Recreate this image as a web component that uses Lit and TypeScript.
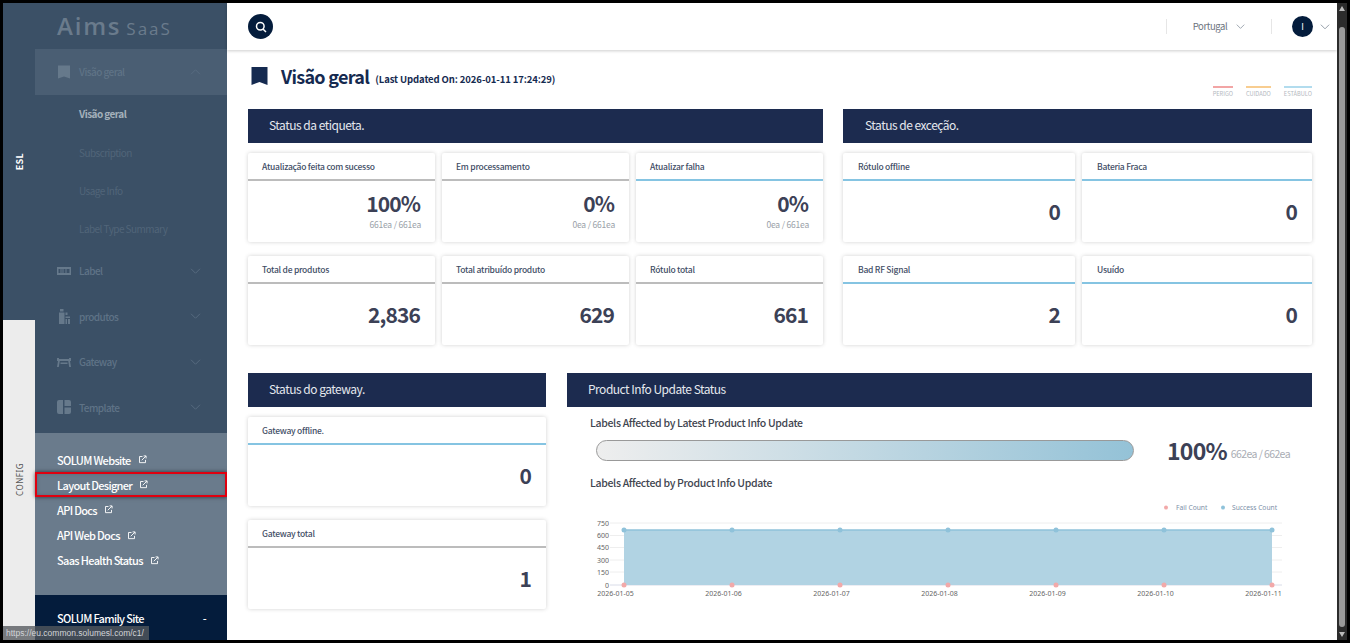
import { LitElement, html, css, svg } from "lit";
import { customElement } from "lit/decorators.js";

const chevron = (cls: string, up = false) => html`<svg class=${cls} viewBox="0 0 14 8" fill="none" stroke="currentColor" stroke-width="1.3"><path d=${up ? "M1 7 7 1l6 6" : "M1 1l6 6 6-6"} /></svg>`;
const ext = html`<svg class="ext" viewBox="0 0 12 12" fill="none" stroke="currentColor" stroke-width="1.2"><path d="M6 2H2v8.200h8V6.500" /><path d="M5 7l5.600-5.600M7.400 1.200h3.400v3.400" /></svg>`;
const navBookmark = html`<svg class="nav-icon" viewBox="0 0 14 18" fill="currentColor"><path d="M1 2.500h12v13l-6-2-6 2z" /></svg>`;

const labelIcon = html`<svg class="nav-icon" viewBox="0 0 14 18" fill="currentColor"><path fill-rule="evenodd" d="M0 5h14v8H0zM1.500 7v4h2V7zm3 0v4h1V7zm2 0v4h2V7zm3 0v4h3V7z" /></svg>`;
const productIcon = html`<svg class="nav-icon" viewBox="0 0 14 18" fill="currentColor"><path d="M2 5.500h5.500V17H2zM3 2h3.500v2.500H3zM8.500 9.500H13V11H8.500zM8.500 12H10v5H8.500zM11 12h2v5h-2zM8.500 5.500h2v2.500h-2z" /></svg>`;
const gatewayIcon = html`<svg class="nav-icon" viewBox="0 0 14 18" fill="currentColor"><path d="M0 5h2v1h10V5h2v3h-1l1 6h-1.800l-1-6H2.800l-1 6H0l1-6H0z" /><path d="M3.500 9.500h7V11h-7z" /></svg>`;
const templateIcon = html`<svg class="nav-icon" viewBox="0 0 14 18" fill="currentColor"><path d="M2 2h4v14H2a2 2 0 0 1-2-2V4a2 2 0 0 1 2-2zM7.500 2H12a2 2 0 0 1 2 2v4H7.500zM7.500 9.500H14V14a2 2 0 0 1-2 2H7.500z" /></svg>`;

type Card = { title: string; value: string; sub?: string; tone: "grey" | "blue" };

const labelCards: Card[] = [
  { title: "Atualização feita com sucesso", value: "100%", sub: "661ea / 661ea", tone: "grey" },
  { title: "Em processamento", value: "0%", sub: "0ea / 661ea", tone: "grey" },
  { title: "Atualizar falha", value: "0%", sub: "0ea / 661ea", tone: "blue" },
  { title: "Total de produtos", value: "2,836", tone: "grey" },
  { title: "Total atribuído produto", value: "629", tone: "grey" },
  { title: "Rótulo total", value: "661", tone: "grey" },
];
const exceptionCards: Card[] = [
  { title: "Rótulo offline", value: "0", tone: "blue" },
  { title: "Bateria Fraca", value: "0", tone: "blue" },
  { title: "Bad RF Signal", value: "2", tone: "blue" },
  { title: "Usuído", value: "0", tone: "blue" },
];
const gatewayCards: Card[] = [
  { title: "Gateway offline.", value: "0", tone: "blue" },
  { title: "Gateway total", value: "1", tone: "grey" },
];

const xs = [624, 732, 840, 948, 1056, 1164, 1272];
const dates = ["2026-01-05", "2026-01-06", "2026-01-07", "2026-01-08", "2026-01-09", "2026-01-10", "2026-01-11"];
const ticks = [[750, 523], [600, 535.5], [450, 547.5], [300, 560], [150, 572], [0, 585]];
const OX = 590;
const OY = 497;

@customElement("app-root")
export class AppRoot extends LitElement {
  static styles = css`
    :host { display: block; width: 1350px; height: 643px; overflow: hidden; background: #000; position: relative; font-family: "Noto Sans CJK KR", "Noto Sans", sans-serif; color: #3a4256; }
    * { box-sizing: border-box; }
    .frame { display: flex; height: 637px; margin: 3px 0 3px 3px; }

    .rail { width: 32px; flex: none; display: flex; flex-direction: column; }
    .rail-top { height: 317px; background: #3b5066; display: flex; justify-content: center; padding-top: 150px; }
    .rail-bottom { flex: 1; background: #ececec; display: flex; justify-content: center; padding-top: 143px; }
    .vert { writing-mode: vertical-rl; transform: rotate(180deg); height: max-content; }
    .esl { font-size: 9px; font-weight: 700; color: #fff; letter-spacing: .3px; }
    .config { font-size: 8px; color: #555; letter-spacing: .5px; font-family: "Noto Sans", sans-serif; }

    .side { width: 192px; flex: none; display: flex; flex-direction: column; background: #3b5066; }
    .logo { height: 46px; display: flex; align-items: center; gap: 5px; padding-left: 22px; color: #6a7b8c; white-space: nowrap; }
    .logo b { font: 600 24px/1 "Open Sans", sans-serif; letter-spacing: 1.8px; }
    .logo span { font: 400 17px/1 "Open Sans", sans-serif; letter-spacing: 2px; padding-top: 4px; }
    .nav { flex: 1; }
    .nav-item { height: 45.5px; display: flex; align-items: center; padding-left: 22px; font-size: 10px; font-weight: 500; letter-spacing: -.55px; color: #5f7386; }
    .nav-item.active { background: #4a5e73; }
    .nav-icon { width: 14px; height: 18px; flex: none; margin-right: 8px; color: #66798b; }
    .nav-item .chev { width: 11px; height: 6px; margin-left: auto; margin-right: 26px; color: #566b80; }
    .sub { height: 38.4px; display: flex; align-items: center; padding-left: 44px; font-size: 10px; letter-spacing: -.55px; color: #516579; }
    .sub.current { color: #a4b0bb; font-weight: 700; }

    .links { height: 162px; background: #6a7b8c; padding-top: 14px; }
    .link { height: 25.2px; display: flex; align-items: center; gap: 7px; padding-left: 22px; font-size: 11px; font-weight: 500; letter-spacing: -.66px; color: #fff; white-space: nowrap; }
    .ext { width: 9px; height: 9px; flex: none; }
    .link.hl { box-shadow: inset 0 0 0 2px #e0000f, 0 0 4px rgba(0, 0, 0, .6), inset 0 0 5px rgba(0, 0, 0, .4); }
    .family { height: 45px; background: #041c3c; color: #fff; display: flex; align-items: center; justify-content: space-between; padding: 0 21px 0 22px; font-size: 11px; font-weight: 500; letter-spacing: -.66px; }

    .main { flex: 1; background: #fff; display: flex; flex-direction: column; min-width: 0; }
    .top { height: 47px; flex: none; display: flex; align-items: center; padding: 0 7px 0 21px; box-shadow: 0 1px 3px rgba(0, 0, 0, .2); }
    .search { width: 25px; height: 25px; border-radius: 50%; background: #041c3c; display: grid; place-items: center; color: #fff; }
    .search svg { width: 12px; height: 12px; }
    .sep { width: 1px; height: 15px; background: #e6e6e6; }
    .country { margin-left: auto; }
    .lang { display: flex; align-items: center; gap: 9px; font-size: 9.5px; letter-spacing: -.4px; color: #6d7480; width: 104px; justify-content: center; padding-bottom: 1px; }
    .lang svg { width: 9px; height: 5px; color: #8a94a0; }
    .user svg { width: 10px; height: 5.5px; color: #8a94a0; }
    .user { display: flex; align-items: center; gap: 7px; padding-left: 20px; }
    .avatar { width: 21px; height: 21px; border-radius: 50%; background: #041c3c; color: #fff; display: grid; place-items: center; font-size: 9px; }

    .body { flex: 1; padding: 5px 25px 0 21px; display: flex; flex-direction: column; min-height: 0; }
    .head { height: 44px; flex: none; display: flex; align-items: center; padding-bottom: 2px; }
    .mark { width: 17px; height: 18px; color: #152a50; margin: 0 13px 0 3px; flex: none; }
    .head h1 { margin: 0; font-size: 18px; font-weight: 700; letter-spacing: -.7px; color: #152a50; line-height: 1; }
    .head small { font-size: 9.5px; font-weight: 700; letter-spacing: -.1px; color: #152a50; margin-left: 6px; padding-top: 5px; }
    .legend { margin-left: auto; display: flex; gap: 13px; align-self: flex-end; margin-bottom: 0; font-size: 5.7px; color: #b4b9c0; }
    .legend span { padding-top: 3px; border-top: 2px solid; line-height: 1; }
    .legend .r { border-color: #f2a5a5; }
    .legend .y { border-color: #f8cd90; }
    .legend .b { border-color: #b2dcee; }

    .row { display: grid; gap: 20px; }
    .row.one { grid-template-columns: 575px 1fr; height: 264px; margin-top: 10px; }
    .row.two { grid-template-columns: 298px 1fr; gap: 21px; }
    .band { height: 34px; background: #1c2b4f; color: #e4e8ee; font-size: 12px; letter-spacing: -.5px; display: flex; align-items: center; padding: 0 0 3px 21px; white-space: nowrap; }
    .exception .band { padding-left: 22px; }
    .cards { display: grid; gap: 14px 7px; margin-top: 10px; }
    .cards.c3 { grid-template-columns: repeat(3, 1fr); }
    .cards.c2 { grid-template-columns: 232px 230px; }
    .cards.c1 { grid-template-columns: 1fr; }
    .card { height: 89px; border-radius: 2px; box-shadow: 0 0 4px rgba(0, 0, 0, .18); display: flex; flex-direction: column; background: #fff; }
    .t { height: 28px; flex: none; border-bottom: 2px solid; padding: 0 14px; font-size: 8.5px; font-weight: 500; letter-spacing: -.25px; color: #3f4e66; display: flex; align-items: center; white-space: nowrap; }
    .exception .t { padding-left: 15px; }
    .grey .t { border-color: #bcbcbc; }
    .blue .t { border-color: #85c4e2; }
    .v { flex: 1; display: flex; flex-direction: column; align-items: flex-end; justify-content: center; padding: 0 15px 2px 14px; font-size: 21px; font-weight: 700; letter-spacing: -.9px; color: #3c4156; line-height: 24px; }
    .s { font-size: 8.5px; font-weight: 400; color: #9a9fa8; line-height: 12px; letter-spacing: -.2px; margin-top: 3px; margin-right: -1px; }

    .info { padding: 8px 0 0 23px; }
    .info h3 { margin: 0; font-size: 10.5px; font-weight: 500; letter-spacing: -.33px; color: #3f4550; line-height: 16px; }
    .meter { display: flex; align-items: center; margin: 8px 0 14px 6px; }
    .bar { width: 538px; height: 21px; border-radius: 11px; border: 1px solid #999; background: linear-gradient(90deg, #eeeeee, #94c2d7); }
    .pct { margin-left: 33px; font-size: 23px; font-weight: 700; letter-spacing: -.75px; color: #3c4156; line-height: 21px; }
    .ea { margin-left: 4px; font-size: 10.5px; letter-spacing: -.6px; color: #a9adb4; padding-top: 7px; }
    .chart { display: block; margin-top: 6px; width: 700px; height: 110px; overflow: visible; }
    .chart text { font-family: "Noto Sans", sans-serif; font-size: 7px; fill: #666; }
    .chart .lg { fill: #7d8fa8; font-size: 6.7px; }

    .bar-v { width: 10px; flex: none; background: #2c2c2c; display: flex; flex-direction: column; align-items: center; }
    .arrow { flex: none; width: 0; height: 0; border-left: 3.5px solid transparent; border-right: 3.5px solid transparent; }
    .up { border-bottom: 5px solid #bbb; margin-top: 3px; }
    .down { border-top: 5px solid #bbb; margin-bottom: 3px; }
    .thumb { flex: 1; width: 6px; background: #9a9a9a; margin: 16px 0 5px; border-radius: 3px; }
    .right-edge { width: 3px; flex: none; }

    .status { position: absolute; left: 3px; bottom: 3px; height: 14px; width: 146px; background: rgba(85, 88, 94, .78); color: #d2d4d8; font: 8.5px/14px "Liberation Sans", sans-serif; padding-left: 3px; white-space: nowrap; }
  `;

  private card(c: Card) {
    return html`<div class="card ${c.tone}"><div class="t">${c.title}</div><div class="v">${c.value}${c.sub ? html`<span class="s">${c.sub}</span>` : ""}</div></div>`;
  }

  private chart() {
    const pts = xs.map((x) => `${x - OX},${530 - OY}`).join(" ");
    const area = `${pts} ${1272 - OX},${585 - OY} ${624 - OX},${585 - OY}`;
    return html`<svg class="chart" viewBox="0 0 700 110">
      ${ticks.map(([v, y]) => svg`
        <line x1="20" x2="692" y1=${y - OY} y2=${y - OY} stroke=${v === 0 ? "#d9dce8" : "#eeeeee"} />
        <text x="19" y=${y - OY + 2.5} text-anchor="end">${v}</text>`)}
      <polygon points=${area} fill="#b1d3e3" />
      <polyline points=${pts} fill="none" stroke="#8fc2da" stroke-width="1.5" />
      ${xs.map((x, i) => svg`
        <circle cx=${x - OX} cy=${530 - OY} r="2.5" fill="#8fc2da" />
        <circle cx=${x - OX} cy=${585 - OY} r="2.5" fill="#f2a9a9" />
        <text x=${x - OX - 8.5} y=${596 - OY} text-anchor="middle">${dates[i]}</text>`)}
      <circle cx=${1166 - OX} cy=${507.5 - OY} r="2" fill="#f2a9a9" />
      <text class="lg" x=${1176 - OX} y=${509.5 - OY}>Fail Count</text>
      <circle cx=${1223 - OX} cy=${507.5 - OY} r="2" fill="#8fc2da" />
      <text class="lg" x=${1232 - OX} y=${509.5 - OY}>Success Count</text>
    </svg>`;
  }

  render() {
    return html`
      <div class="frame">
        <div class="rail">
          <div class="rail-top"><span class="vert esl">ESL</span></div>
          <div class="rail-bottom"><span class="vert config">CONFIG</span></div>
        </div>
        <aside class="side">
          <div class="logo"><b>Aims</b><span>SaaS</span></div>
          <nav class="nav">
            <div class="nav-item active">${navBookmark}Visão geral${chevron("chev", true)}</div>
            <div class="sub current">Visão geral</div>
            <div class="sub">Subscription</div>
            <div class="sub">Usage Info</div>
            <div class="sub">Label Type Summary</div>
            <div class="nav-item">${labelIcon}Label${chevron("chev")}</div>
            <div class="nav-item">${productIcon}produtos${chevron("chev")}</div>
            <div class="nav-item">${gatewayIcon}Gateway${chevron("chev")}</div>
            <div class="nav-item">${templateIcon}Template${chevron("chev")}</div>
          </nav>
          <div class="links">
            <div class="link">SOLUM Website ${ext}</div>
            <div class="link hl">Layout Designer ${ext}</div>
            <div class="link">API Docs ${ext}</div>
            <div class="link">API Web Docs ${ext}</div>
            <div class="link">Saas Health Status ${ext}</div>
          </div>
          <div class="family"><span>SOLUM Family Site</span><span>-</span></div>
        </aside>
        <main class="main">
          <header class="top">
            <div class="search"><svg viewBox="0 0 12 12" fill="none" stroke="currentColor" stroke-width="1.5"><circle cx="5.3" cy="5.3" r="3.800" /><path d="M8 8l3 3" /></svg></div>
            <div class="sep country"></div>
            <div class="lang">Portugal ${chevron("")}</div>
            <div class="sep"></div>
            <div class="user"><div class="avatar">I</div>${chevron("")}</div>
          </header>
          <div class="body">
            <div class="head">
              <svg class="mark" viewBox="0 0 16 18" fill="currentColor"><path d="M0 0h16v18l-8-3-8 3z" /></svg>
              <h1>Visão geral</h1><small>(Last Updated On: 2026-01-11 17:24:29)</small>
              <div class="legend"><span class="r">PERIGO</span><span class="y">CUIDADO</span><span class="b">ESTÁBULO</span></div>
            </div>
            <div class="row one">
              <section><div class="band">Status da etiqueta.</div><div class="cards c3">${labelCards.map((c) => this.card(c))}</div></section>
              <section class="exception"><div class="band">Status de exceção.</div><div class="cards c2">${exceptionCards.map((c) => this.card(c))}</div></section>
            </div>
            <div class="row two">
              <section><div class="band">Status do gateway.</div><div class="cards c1">${gatewayCards.map((c) => this.card(c))}</div></section>
              <section>
                <div class="band">Product Info Update Status</div>
                <div class="info">
                  <h3>Labels Affected by Latest Product Info Update</h3>
                  <div class="meter"><div class="bar"></div><span class="pct">100%</span><span class="ea">662ea / 662ea</span></div>
                  <h3>Labels Affected by Product Info Update</h3>
                  ${this.chart()}
                </div>
              </section>
            </div>
          </div>
        </main>
        <div class="bar-v"><i class="arrow up"></i><div class="thumb"></div><i class="arrow down"></i></div>
        <div class="right-edge"></div>
      </div>
      <div class="status">https://eu.common.solumesl.com/c1/</div>
    `;
  }
}
